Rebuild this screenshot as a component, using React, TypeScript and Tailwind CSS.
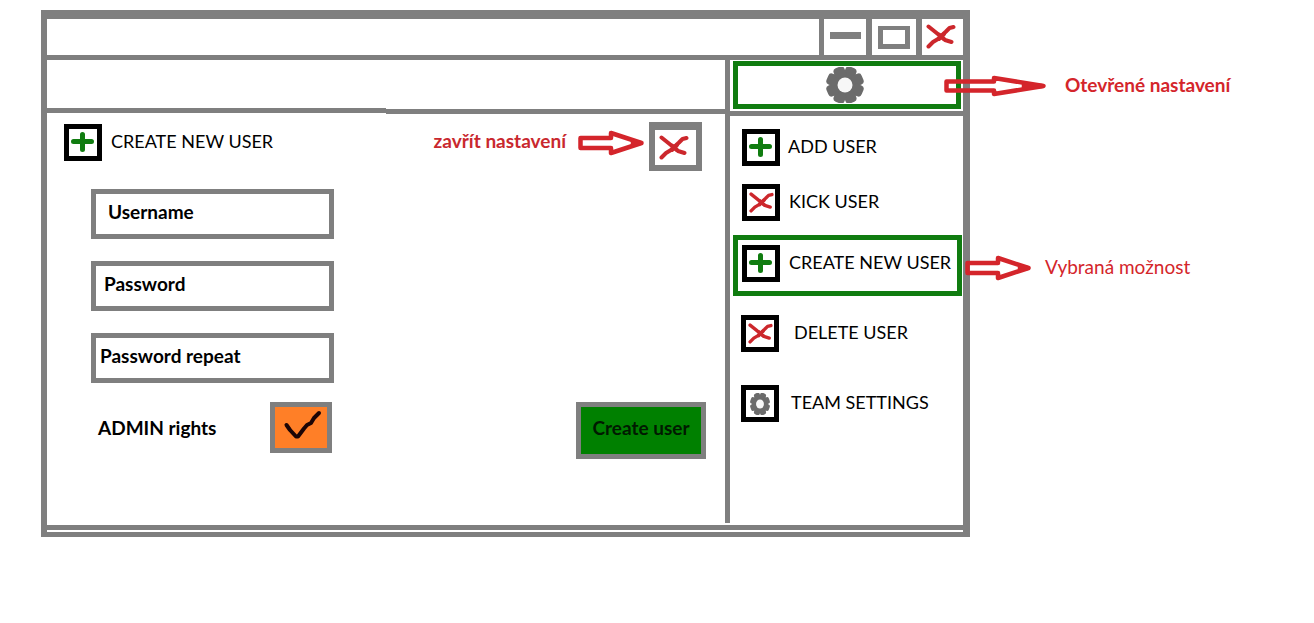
import type { ReactNode } from 'react';

const RED = '#d4252b';

function Cross({ className }: { className: string }) {
  return (
    <svg viewBox="0 0 30 25" className={className} preserveAspectRatio="none" fill="none" stroke="#cc272c" strokeWidth="4" strokeLinecap="round" strokeLinejoin="round" aria-hidden="true">
      <path d="M2.500 2.500L10 8.500L19 16L25.500 18" />
      <path d="M27.500 3L23.500 4L20 7.500L12 15L7 18L2.500 22.500" />
      <path d="M13 10.500L18 15M18 10L13 15" />
    </svg>
  );
}

function Plus() {
  return (
    <svg viewBox="0 0 24 22" className="h-[22px] w-6" stroke="#107c10" strokeWidth="5" strokeLinecap="round" aria-hidden="true">
      <path d="M2.500 9.500H20.500M11.500 2.500V17.500" />
    </svg>
  );
}

function Gear({ className }: { className: string }) {
  return (
    <svg viewBox="0 0 38 36" className={className} preserveAspectRatio="none" aria-hidden="true">
      <g fill="#6b6b6b">
        <circle cx="19" cy="18" r="15" />
        {[22.5, 67.5, 112.5, 157.5, 202.5, 247.5, 292.5, 337.5].map((a) => (
          <rect key={a} x="13.250" y="-1" width="11.500" height="11" rx="3.500" transform={`rotate(${a} 19 18)`} />
        ))}
      </g>
      <circle cx="19" cy="18" r="7.500" fill="#f7f7f7" />
    </svg>
  );
}

function IconBox({ children }: { children: ReactNode }) {
  return (
    <span className="flex h-[37px] w-[38px] shrink-0 items-center justify-center border-5 border-black bg-white">
      {children}
    </span>
  );
}

function Arrow({ long = false }: { long?: boolean }) {
  return long ? (
    <svg viewBox="0 0 103 22" className="h-[22px] w-[103px] shrink-0" fill="none" stroke={RED} strokeWidth="4.500" strokeLinejoin="round" aria-hidden="true">
      <path d="M2.500 6.500H50V3L99.500 11L50 19V15.500H2.500Z" />
      <path d="M80 9.500L98 11L80 12.500Z" />
    </svg>
  ) : (
    <svg viewBox="0 0 67 26" className="h-[26px] w-[67px] shrink-0" fill="none" stroke={RED} strokeWidth="4.500" strokeLinejoin="round" aria-hidden="true">
      <path d="M2.500 8H33V3L63.500 13L33 23V18H2.500Z" />
      <path d="M55 11.500L62 13L55 14.500Z" />
    </svg>
  );
}

function Field({ label, type, pad }: { label: string; type: string; pad: string }) {
  return (
    <input
      type={type}
      aria-label={label}
      placeholder={label}
      className={`h-[50px] w-full border-5 border-[#7f7f7f] bg-white pb-[6px] text-[19px] font-bold outline-none placeholder:text-black placeholder:opacity-100 ${pad}`}
    />
  );
}

function MenuItem({ icon, label, className }: { icon: ReactNode; label: string; className: string }) {
  return (
    <button type="button" className={`flex text-left ${className}`}>
      <IconBox>{icon}</IconBox>
      <span className="whitespace-nowrap pt-1 leading-[26px]">{label}</span>
    </button>
  );
}

export default function App() {
  return (
    <div className="bg-white pt-[10px] pr-[344px] pb-20 pl-[41px] font-['Lato','Liberation_Sans',sans-serif] text-lg text-black">
      <main className="border-t-9 border-r-7 border-b-5 border-l-6 border-[#7f7f7f] pb-[2px]">
        <header className="flex h-[41px] justify-end border-b-5 border-[#7f7f7f]">
          <button type="button" aria-label="Minimize" className="flex w-[47px] items-center justify-center border-l-5 border-[#7f7f7f] pb-1">
            <span className="h-[7px] w-[31px] bg-[#7f7f7f]" />
          </button>
          <button type="button" aria-label="Maximize" className="flex w-[50px] items-center justify-center border-l-6 border-[#7f7f7f]">
            <span className="h-[23px] w-8 border-5 border-t-4 border-[#7f7f7f]" />
          </button>
          <button type="button" aria-label="Close" className="flex w-[47px] items-center border-l-6 border-[#7f7f7f] pb-[2px] pl-1">
            <Cross className="h-[25px] w-[30px]" />
          </button>
        </header>

        <div className="flex border-b-5 border-[#7f7f7f] pb-[2px]">
          <section className="min-w-0 flex-1">
            <div className="flex h-[54px] items-start">
              <div className="h-[53px] w-1/2 border-b-5 border-[#7f7f7f]" />
              <div className="h-[54px] w-1/2 border-b-5 border-[#7f7f7f]" />
            </div>

            <div className="flex items-start pt-2 pr-[23px] pl-[17px]">
              <div className="flex gap-[9px] pt-[2px]">
                <IconBox><Plus /></IconBox>
                <h1 className="pt-1 leading-[26px]">CREATE NEW USER</h1>
              </div>
              <div className="ml-auto flex items-start gap-1">
                <div className="flex items-start gap-3 pt-2">
                  <span className="text-[19px] leading-[22px] font-bold text-[#c9282e]">zavřít nastavení</span>
                  <Arrow />
                </div>
                <button type="button" aria-label="zavřít nastavení" className="flex h-[49px] w-[53px] items-center border-6 border-t-8 border-[#7f7f7f] pl-1">
                  <Cross className="h-[25px] w-[30px]" />
                </button>
              </div>
            </div>

            <form className="flex items-end justify-between pt-[18px] pr-[19px] pb-16 pl-11" onSubmit={(e) => e.preventDefault()}>
              <div className="flex w-[243px] flex-col gap-[22px]">
                <Field label="Username" type="text" pad="pl-3" />
                <Field label="Password" type="password" pad="pl-2" />
                <Field label="Password repeat" type="password" pad="pl-1" />
                <div className="-mt-[3px] flex h-[57px] items-start justify-between pr-[2px] pl-[7px]">
                  <label htmlFor="admin" className="pt-3 text-[19px] leading-7 font-bold">ADMIN rights</label>
                  <span className="relative h-[51px] w-[62px]">
                    <input id="admin" type="checkbox" defaultChecked className="peer block h-full w-full appearance-none border-5 border-[#7f7f7f] bg-[#ff7f27]" />
                    <svg viewBox="0 0 62 51" className="pointer-events-none absolute inset-0 hidden h-full w-full peer-checked:block" fill="none" stroke="#1c0505" strokeWidth="4" strokeLinecap="round" strokeLinejoin="round" aria-hidden="true">
                      <path d="M16.500 23L20 28L26 34.500H28L34 26.500L37 23L41 21L44 16L49 11" />
                    </svg>
                  </span>
                </div>
              </div>
              <button type="submit" className="h-[57px] w-[130px] border-5 border-[#7f7f7f] bg-[#008000] pb-[6px] text-[19px] font-bold whitespace-nowrap text-[#001a00]">Create user</button>
            </form>
          </section>

          <aside className="w-[238px] shrink-0 border-l-5 border-[#7f7f7f]">
            <div className="relative h-14 border-b-5 border-[#7f7f7f] pt-px pr-[2px] pl-[3px]">
              <button type="button" aria-label="Settings" className="flex h-12 w-full items-center justify-center border-5 border-[#107c10] pr-1">
                <Gear className="h-9 w-[38px]" />
              </button>
              <div className="absolute top-[15px] left-[214px] flex gap-[18px]">
                <Arrow long />
                <span className="text-[19px] leading-5 font-bold whitespace-nowrap text-[#d4252b]">Otevřené nastavení</span>
              </div>
            </div>
            <nav className="flex flex-col pt-[13px] pr-px pl-[3px]">
              <MenuItem icon={<Plus />} label="ADD USER" className="gap-2 pl-[9px]" />
              <MenuItem icon={<Cross className="h-[21px] w-[25px]" />} label="KICK USER" className="mt-[18px] gap-[9px] pl-[9px]" />
              <div className="relative mt-[14px]">
                <MenuItem icon={<Plus />} label="CREATE NEW USER" className="h-[61px] w-full gap-[9px] border-5 border-[#107c10] pt-[5px] pl-1" />
                <div className="absolute top-5 left-[232px] flex gap-[13px]">
                  <Arrow />
                  <span className="text-[19px] leading-6 whitespace-nowrap text-[#d4252b]">Vybraná možnost</span>
                </div>
              </div>
              <MenuItem icon={<Cross className="h-[21px] w-[25px]" />} label="DELETE USER" className="mt-[19px] gap-[15px] pl-2" />
              <MenuItem icon={<Gear className="h-[22px] w-5" />} label="TEAM SETTINGS" className="mt-[33px] gap-3 pl-2" />
            </nav>
          </aside>
        </div>
      </main>
    </div>
  );
}
